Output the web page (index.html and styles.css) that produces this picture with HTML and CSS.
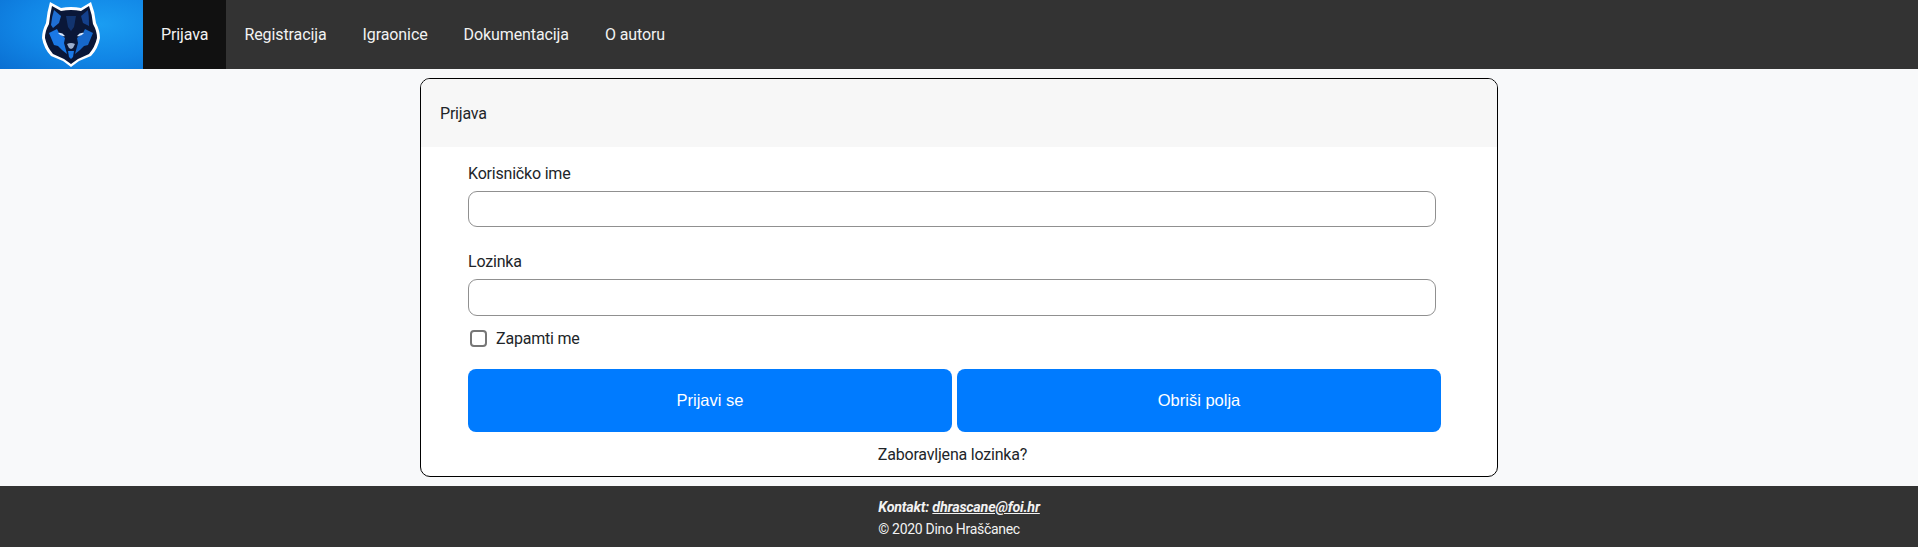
FILE: index.html
```html
<!DOCTYPE html>
<html lang="en">

<head>
    <meta charset="UTF-8">
    <title>Prijava</title>
    <link rel="stylesheet" href="styles.css">
</head>

<body>

    <!-- Navigation Bar -->
    <nav class="topnav">
        <a href="#" class="logo">
            <svg class="logo-wolf" viewBox="0 0 60 66" aria-label="Logo">
                <!-- outline and head -->
                <path d="M9 1 L20 7 Q30 5 40 7 L50 1 Q54 11 55 22 Q59 30 59 37 Q57 48 50 55 L38 60 L30 66 L22 60 L10 55 Q3 48 1 37 Q1 30 5 22 Q6 11 9 1 Z" fill="#ffffff"/>
                <path d="M11 5 L20 10 Q30 8 40 10 L48 5 Q51 13 52 23 Q56 30 56 37 Q54 46 48 53 L37 58 L30 63 L23 58 L12 53 Q6 46 4 37 Q4 30 8 23 Q9 13 11 5 Z" fill="#0a1738"/>
                <!-- ears -->
                <path d="M13 9 L20 15 L18 22 L12 27 L10 24 Q11 15 13 9 Z" fill="#1f6fd4"/>
                <path d="M47 9 L40 15 L42 22 L48 25 Q48 15 47 9 Z" fill="#14408c"/>
                <!-- forehead -->
                <path d="M25 15 L35 15 L33 26 L30 30 L27 26 Z" fill="#12346f"/>
                <!-- cheeks -->
                <path d="M8 32 L16 28 L18 32 L24 37 L23 42 L26 53 L21 49 L17 45 L13 44 Z" fill="#1a78e6"/>
                <path d="M52 32 L44 28 L42 32 L36 37 L37 42 L34 53 L39 49 L43 45 L47 44 Z" fill="#1668cc"/>
                <!-- eyes -->
                <path d="M17 32 Q21 31 24 35 Q20 36 17 32 Z M43 32 Q39 31 36 35 Q40 36 43 32 Z" fill="#d5e8ff"/>
                <!-- muzzle and nose -->
                <path d="M27 50 L33 50 L32 56 L30 58 L28 56 Z" fill="#1a78e6"/>
                <path d="M26 43 Q30 41 34 43 L32 47 L30 48 L28 47 Z" fill="#9db0cf"/>
            </svg>
        </a>
        <ul class="nav-links">
            <li><a href="#" class="active">Prijava</a></li>
            <li><a href="#">Registracija</a></li>
            <li><a href="#">Igraonice</a></li>
            <li><a href="#">Dokumentacija</a></li>
            <li><a href="#">O autoru</a></li>
        </ul>
    </nav>

    <!-- Login card -->
    <main class="content">
        <section class="card">
            <div class="card-header">Prijava</div>
            <form class="card-body">
                <div class="field">
                    <label for="username">Korisničko ime</label>
                    <input type="text" id="username">
                </div>
                <div class="field field-second">
                    <label for="password">Lozinka</label>
                    <input type="password" id="password">
                </div>
                <label class="remember">
                    <span class="check"></span>
                    Zapamti me
                </label>
                <div class="buttons">
                    <button type="submit">Prijavi se</button>
                    <button type="reset">Obriši polja</button>
                </div>
                <a href="#" class="forgot">Zaboravljena lozinka?</a>
            </form>
        </section>
    </main>

    <footer class="footer">
        <div class="footer-text">
            <div class="contact">Kontakt: <a href="#">dhrascane@foi.hr</a></div>
            <div class="copy">© 2020 Dino Hraščanec</div>
        </div>
    </footer>

</body>

</html>
```

FILE: styles.css
```css
* {
    box-sizing: border-box;
}

body {
    margin: 0;
    background-color: #f8f9fa;
    color: #212529;
    font-family: 'Roboto', 'Lato', sans-serif;
    font-size: 16px;
    letter-spacing: -0.2px;
}

/* Navigation Styles */
.topnav {
    display: flex;
    height: 69px;
    background-color: #333333;
}

.logo {
    width: 143px;
    padding: 1px 0 0 41px;
    background: radial-gradient(ellipse at 70% 35%, #1a9df2 0%, #1186e6 55%, #0a6fd2 100%);
}

.logo-wolf {
    display: block;
    width: 60px;
    height: 66px;
    filter: blur(0.4px);
}

.nav-links {
    list-style: none;
    display: flex;
    margin: 0;
    padding: 0;
}

.nav-links a {
    display: flex;
    align-items: center;
    height: 100%;
    padding: 0 18px;
    color: #f2f2f2;
    text-decoration: none;
    letter-spacing: -0.1px;
}

.nav-links a.active {
    background-color: #111111;
}

/* Card */
.content {
    padding: 9px 0;
    display: flex;
    justify-content: center;
}

.card {
    width: 1078px;
    height: 399px;
    background-color: #ffffff;
    border: 1px solid #000000;
    border-radius: 10px;
    overflow: hidden;
}

.card-header {
    height: 68px;
    padding: 0 19px;
    display: flex;
    align-items: center;
    background-color: #f7f7f7;
}

.card-body {
    padding: 14px 0 0 47px;
    display: flex;
    flex-direction: column;
}

.field label {
    display: block;
    height: 30px;
    line-height: 26px;
}

.field-second {
    margin-top: 22px;
}

.field input {
    display: block;
    width: 968px;
    height: 36px;
    background-color: #ffffff;
    border: 1px solid #909090;
    border-radius: 9px;
}

.field-second input {
    height: 37px;
}

.remember {
    display: flex;
    align-items: center;
    height: 24px;
    margin-top: 10px;
    margin-left: 2px;
    gap: 9px;
}

.check {
    width: 17px;
    height: 17px;
    border: 2px solid #767676;
    border-radius: 4px;
}

.buttons {
    display: flex;
    gap: 5px;
    margin-top: 19px;
}

.buttons button {
    width: 484px;
    height: 63px;
    background-color: #007bff;
    color: #ffffff;
    border: 0;
    border-radius: 8px;
    font-family: 'Liberation Sans', sans-serif;
    font-size: 16.5px;
}

.forgot {
    width: 969px;
    margin-top: 11px;
    line-height: 24px;
    text-align: center;
    color: #212529;
    text-decoration: none;
}

/* Footer */
.footer {
    display: flex;
    justify-content: center;
    height: 61px;
    padding-top: 9px;
    background-color: #333333;
    color: #f2f2f2;
}

.contact {
    height: 24px;
    line-height: 24px;
    font-style: italic;
    font-weight: 700;
    font-size: 14.3px;
}

.contact a {
    color: #f2f2f2;
}

.copy {
    line-height: 20px;
    font-size: 14px;
    letter-spacing: -0.3px;
}
```
